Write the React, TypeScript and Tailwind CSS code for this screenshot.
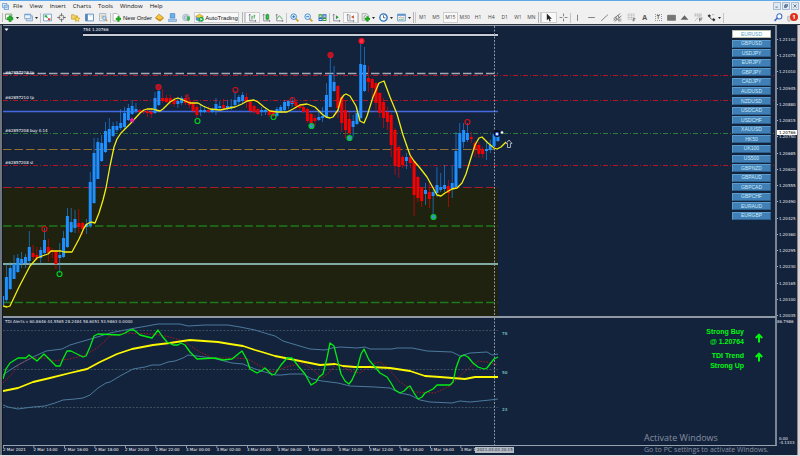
import type { ReactNode } from "react";

const MENU = ["File", "View", "Insert", "Charts", "Tools", "Window", "Help"];
const PERIODS = ["M1", "M5", "M15", "M30", "H1", "H4", "D1", "W1", "MN"];
const SYMBOLS = [
  "EURUSD", "GBPUSD", "USDJPY", "EURJPY", "GBPJPY", "CADJPY", "AUDUSD", "NZDUSD", "USDCAD", "USDCHF",
  "XAUUSD", "HK50", "UK100", "US500", "GBPNZD", "GBPAUD", "GBPCAD", "GBPCHF", "EURAUD", "EURGBP",
];
const PRICES = Array.from({ length: 18 }, (_, i) => (1.2114 - i * 0.00065).toFixed(5));
const TIMES = [
  "2 Mar 2021", "2 Mar 14:00", "2 Mar 16:00", "2 Mar 18:00", "2 Mar 20:00", "2 Mar 22:00",
  "3 Mar 00:00", "3 Mar 02:00", "3 Mar 04:00", "3 Mar 06:00", "3 Mar 08:00", "3 Mar 10:00",
  "3 Mar 12:00", "3 Mar 14:00", "3 Mar 16:00", "3 Mar 1",
];

const BAR_STEP = 3.81;
const UP = "#1e90ff";
const DOWN = "#f80000";

// up (1) or down (0), high, body top, body bottom, low
type Candle = [number, number, number, number, number];
const CANDLES: Candle[] = [
  [1, 292, 296, 305, 308], [1, 264, 277, 300, 302], [1, 262, 268, 289, 290], [1, 255, 264, 279, 279],
  [1, 254, 258, 272, 273], [1, 252, 259, 264, 268], [1, 254, 257, 263, 268], [1, 231, 247, 261, 264],
  [0, 245, 253, 257, 260], [0, 247, 255, 258, 260], [1, 247, 250, 258, 263], [1, 228, 240, 253, 255],
  [0, 239, 247, 253, 262], [0, 248, 250, 252, 258], [0, 250, 251, 264, 269], [1, 243, 255, 258, 273],
  [1, 231, 238, 257, 258], [1, 208, 216, 247, 248], [1, 208, 222, 232, 233], [1, 210, 219, 228, 233],
  [0, 209, 223, 227, 233], [0, 222, 223, 229, 235], [1, 219, 224, 227, 234], [1, 172, 182, 226, 228],
  [1, 138, 153, 203, 204], [1, 138, 142, 179, 179], [1, 135, 143, 161, 162], [1, 122, 131, 152, 153],
  [1, 118, 129, 142, 143], [1, 122, 126, 136, 137], [1, 121, 126, 130, 132], [1, 109, 123, 128, 130],
  [1, 107, 113, 127, 130], [1, 104, 108, 120, 121], [1, 100, 106, 114, 115], [1, 103, 109, 111, 113],
  [0, 109, 110, 112, 113], [0, 109, 111, 112, 114], [0, 110, 111, 113, 117], [0, 108, 112, 114, 118],
  [1, 92, 98, 113, 114], [1, 88, 91, 105, 106], [0, 89, 98, 101, 103], [0, 95, 98, 102, 103],
  [0, 95, 98, 102, 105], [0, 97, 100, 104, 107], [1, 97, 101, 104, 108], [1, 96, 98, 103, 105],
  [0, 95, 98, 103, 105], [0, 98, 101, 105, 108], [0, 101, 103, 111, 113], [0, 105, 107, 115, 118],
  [1, 105, 110, 112, 116], [1, 107, 110, 112, 113], [0, 106, 110, 112, 113], [1, 108, 110, 112, 113],
  [1, 98, 104, 110, 115], [1, 101, 106, 108, 110], [0, 99, 105, 108, 110], [1, 100, 106, 108, 110],
  [1, 99, 106, 108, 110], [1, 91, 100, 105, 107], [1, 95, 97, 102, 106], [1, 92, 95, 101, 103],
  [0, 93, 97, 102, 108], [0, 100, 102, 111, 113], [0, 105, 106, 112, 114], [0, 108, 109, 114, 115],
  [1, 107, 110, 112, 116], [1, 108, 110, 112, 115], [0, 110, 111, 115, 117], [0, 111, 112, 116, 117],
  [1, 107, 109, 116, 117], [1, 105, 107, 111, 113], [1, 100, 102, 110, 111], [1, 100, 101, 106, 109],
  [1, 97, 101, 104, 107], [0, 101, 102, 106, 110], [0, 104, 106, 108, 110], [0, 105, 107, 112, 113],
  [0, 108, 109, 121, 123], [0, 113, 114, 123, 125], [0, 115, 118, 121, 126], [1, 112, 117, 120, 121],
  [1, 107, 116, 118, 122], [1, 83, 95, 117, 118], [1, 57, 75, 107, 107], [1, 66, 82, 91, 92],
  [0, 85, 86, 108, 118], [0, 95, 97, 123, 132], [0, 100, 110, 130, 138], [0, 112, 119, 133, 138],
  [1, 115, 121, 127, 137], [1, 107, 113, 124, 125], [1, 42, 64, 118, 119], [1, 47, 65, 91, 92],
  [0, 66, 78, 82, 92], [0, 78, 79, 88, 98], [0, 82, 83, 103, 112], [0, 92, 93, 113, 118],
  [0, 98, 102, 118, 128], [0, 107, 112, 122, 130], [0, 113, 115, 145, 157], [0, 128, 130, 165, 175],
  [0, 145, 147, 167, 178], [0, 155, 157, 165, 168], [1, 153, 157, 161, 169], [0, 153, 157, 163, 168],
  [0, 160, 161, 195, 216], [0, 176, 177, 198, 202], [0, 187, 188, 201, 207], [1, 183, 190, 194, 205],
  [0, 182, 192, 199, 208], [1, 190, 192, 196, 217], [1, 167, 185, 193, 197], [1, 173, 187, 190, 192],
  [1, 165, 185, 189, 192], [0, 180, 186, 193, 207], [1, 165, 183, 189, 198], [1, 132, 151, 187, 188],
  [1, 123, 133, 168, 169], [1, 123, 130, 142, 148], [1, 123, 133, 140, 142], [0, 132, 137, 139, 143],
  [0, 141, 143, 149, 157], [0, 142, 145, 154, 158], [0, 147, 149, 154, 158], [1, 142, 149, 151, 160],
  [1, 140, 145, 150, 153], [1, 133, 134, 146, 147], [1, 130, 135, 141, 142],
];

const AVERAGE =
  "3,306 7,307 10,306 19,287 30,266 37,258 42,256 48,254 51,251 61,251 64,252 72,252 79,239 84,228 87,224 91,222 95,223 99,213 103,200 106,188 110,166 114,147 117,139 121,133 130,124 140,113 144,110 147,109 153,109 156,110 160,111 163,109 170,102 175,99 178,98 183,100 190,103 198,103 203,106 210,109 220,110 235,107 242,104 247,101 254,100 258,102 264,107 270,111 278,112 287,112 293,109 300,105 307,104 315,107 322,114 326,117 330,118 333,117 338,110 341,99 344,95 346,94 350,96 356,106 360,121 364,123 367,116 373,97 379,83 384,81 390,97 397,114 403,135 410,155 414,161 420,168 427,177 432,186 437,195 441,196 445,193 452,189 457,188 462,183 466,174 470,161 475,145 479,138 482,137 488,143 494,148 497,149 501,147 506,142";

const BAND_TOP =
  "3,375 10,370 18,365 33,357 46,351 62,349 70,345 94,338 110,333 130,329 147,326 158,324 180,324 188,326 205,325 228,325 240,327 255,330 268,334 275,336 283,341 293,344 310,349 325,350 332,348 340,347 357,348 365,347 370,349 392,349 397,348 412,348 427,351 452,352 460,356 470,353 487,352 492,355 498,354";
const BAND_BOTTOM =
  "3,405 8,407 18,409 25,408 33,407 45,406 55,403 63,400 75,399 83,398 90,395 98,388 106,383 110,382 120,376 133,369 145,367 152,365 160,365 168,362 175,361 183,358 188,355 197,356 212,358 220,360 232,363 243,364 255,369 265,372 275,375 282,375 290,374 303,374 312,379 322,381 338,383 350,386 375,387 390,388 400,393 410,395 420,400 430,402 452,403 460,401 470,402 480,401 490,400 498,399";
const BASE =
  "3,391 18,388 33,382 50,378 70,373 87,369 100,362 117,354 132,349 153,345 170,343 183,341 190,340 218,342 230,344 243,346 255,350 262,352 275,356 290,359 305,362 320,365 335,364 343,366 355,367 370,367 390,368 410,371 425,376 440,377 465,379 475,377 498,377";
const SIGNAL =
  "3,383 12,374 20,364 30,358 47,358 53,361 70,359 85,355 97,348 110,336 125,333 153,334 170,337 183,341 200,352 213,358 235,358 248,359 260,366 272,372 290,366 303,363 313,370 322,378 330,372 337,363 350,371 360,373 372,364 380,362 388,368 400,382 415,392 435,393 450,386 460,376 470,367 478,361 487,362 498,365";
const RSI =
  "3,379 6,369 10,363 18,358 26,358 29,355 33,358 37,361 44,354 51,361 56,366 60,366 63,359 67,351 71,351 83,357 86,356 90,347 94,336 98,334 120,335 125,333 130,330 134,330 140,335 152,338 158,330 162,336 167,342 173,345 178,345 181,343 185,345 190,352 197,359 215,358 223,360 232,359 237,355 242,351 247,360 250,369 257,373 261,371 265,368 272,375 275,374 281,365 287,358 292,358 299,367 305,374 311,385 316,382 319,377 323,374 327,358 330,343 334,346 337,358 341,374 345,381 349,384 352,380 357,369 361,354 364,349 369,360 375,367 380,373 387,377 391,383 395,390 400,393 404,391 408,387 410,386 414,393 418,399 422,397 425,393 433,389 437,385 450,385 453,382 456,368 460,357 464,355 468,357 473,363 478,367 484,369 487,368 490,364 494,359 498,357";

const CHART_FONT = "DejaVu Sans, sans-serif";

function Icon({ children }: { children: ReactNode }) {
  return (
    <svg viewBox="0 0 16 16" className="size-[9px] shrink-0" fill="none" aria-hidden="true">
      {children}
    </svg>
  );
}

function Sep() {
  return <div className="h-[10px] w-px shrink-0 bg-[#c4c4c4]" />;
}

function DoubleSep() {
  return (
    <div className="flex h-[11px] w-[3px] shrink-0 justify-between">
      <div className="w-px bg-[#b4b4b4]" />
      <div className="w-px bg-[#c8c8c8]" />
    </div>
  );
}

function Tool({ label, pressed, menu, children }: { label: string; pressed?: boolean; menu?: boolean; children: ReactNode }) {
  return (
    <button
      type="button"
      aria-label={label}
      className={
        pressed
          ? "flex h-[11px] flex-1 items-center justify-center border border-[#cfcfcf] bg-[#f9f9f9]"
          : "flex h-[11px] flex-1 items-center justify-center gap-[2px]"
      }
    >
      {children}
      {menu && (
        <svg viewBox="0 0 6 4" className="h-[2px] w-[3px]" aria-hidden="true">
          <path d="M0 0h6L3 4z" fill="#222" />
        </svg>
      )}
    </button>
  );
}

const plus = <path d="M7 9h3V6h3v3h3v3h-3v3h-3v-3H7z" fill="#18b018" stroke="#0a7a0a" strokeWidth=".6" />;
const axes = <path d="M3 2v12h11M1.500 4 3 2l1.500 2M12.500 12.500 14.500 14l-2 1.500" stroke="#667" strokeWidth="1.200" />;

function Toolbar() {
  return (
    <div className="flex h-[13px] shrink-0 items-center overflow-hidden bg-[#f0f0f0] font-['Open_Sans',sans-serif]" role="toolbar">
      <div className="ml-[2px] h-[9px] w-px shrink-0 bg-[#bbb]" />
      <div className="flex w-[37px] shrink-0">
        <Tool label="New chart" menu>
          <Icon>
            <path d="M1 2h11v9H1z" fill="#fff" stroke="#5a8a5a" strokeWidth="1.400" />
            <path d="M7 15v-3H4V8h3V5h4v3h3v4h-3v3z" fill="#20b428" stroke="#0b7c16" />
          </Icon>
        </Tool>
        <Tool label="Profiles" menu>
          <Icon>
            <path d="M4 5h11v9H4z" fill="#cfe2f5" stroke="#5580b0" />
            <path d="M1 2h11v8H1z" fill="#e8f2fc" stroke="#5580b0" />
            <path d="M1 2h11v2H1z" fill="#6fa3da" />
          </Icon>
        </Tool>
      </div>
      <Sep />
      <div className="flex w-[69px] shrink-0">
        <Tool label="Market watch">
          <Icon>
            <path d="M1 2h14v12H1z" fill="#fff" stroke="#5c92c8" strokeWidth="1.400" />
            <path d="M3 8V4h5L6.500 5.500 9 8 7 9 5 7z" fill="#1ba83a" />
            <path d="M13 8v5H8l1.500-1.500L8 10l2-1 1.500 1z" fill="#e03a2a" />
          </Icon>
        </Tool>
        <Tool label="Data window">
          <Icon>
            <circle cx="8" cy="8" r="4.500" stroke="#666" strokeWidth="1.400" />
            <path d="M8 0v6M8 10v6M0 8h6M10 8h6" stroke="#666" strokeWidth="1.400" />
          </Icon>
        </Tool>
        <Tool label="Navigator">
          <Icon>
            <path d="M1 3h4l1 2h5v6H1z" fill="#f8d35c" stroke="#b08a20" />
            <path d="m11 6 1.500 3 3.300.4-2.400 2.300.6 3.300-3-1.600L8 15l.6-3.300L6.200 9.400 9.500 9z" fill="#fbe14a" stroke="#b48d18" />
          </Icon>
        </Tool>
        <Tool label="Terminal">
          <Icon>
            <path d="M1 2h14v12H1z" fill="#fff" stroke="#4c82be" strokeWidth="1.500" />
            <path d="M1 2h4v12H1z" fill="#4c82be" />
            <path d="M7 5h6" stroke="#a8c8ea" />
          </Icon>
        </Tool>
        <Tool label="Strategy tester">
          <Icon>
            <path d="M1 1h11v13H1z" fill="#f2f6fb" stroke="#6f93bb" />
            <path d="M3 4h7M3 6.500h5M3 9h4" stroke="#cc9a4a" />
            <circle cx="9.500" cy="9" r="3.200" fill="#bfe0f8" stroke="#4f7fb4" />
            <path d="m12 11.500 3 3" stroke="#c99025" strokeWidth="2" />
          </Icon>
        </Tool>
      </div>
      <Sep />
      <div className="flex w-[42px] shrink-0">
        <button type="button" className="flex flex-1 items-center justify-center gap-[2px] font-['Liberation_Sans',sans-serif] text-[6px] leading-none whitespace-nowrap text-[#111]">
          <Icon>
            <path d="M2 1h7l3 3v10H2z" fill="#fff" stroke="#888" />
            {plus}
          </Icon>
          New Order
        </button>
      </div>
      <div className="flex w-[40px] shrink-0">
        <Tool label="MetaEditor">
          <Icon>
            <path d="m1 8 6-6 8 6-6 6z" fill="#f4c53c" stroke="#a37514" />
            <path d="m1 8 8 4 6-4v2l-6 5-8-5z" fill="#c58c1c" />
          </Icon>
        </Tool>
        <Tool label="Community">
          <Icon>
            <path d="M4 1h8v8H4z" fill="#68b0ee" stroke="#2e76bb" />
            <path d="M1 11h14v4H1z" fill="#a7c9ec" stroke="#5a8fc4" />
          </Icon>
        </Tool>
        <Tool label="Signals">
          <Icon>
            <circle cx="7" cy="8" r="6" fill="#cfdce8" stroke="#8aa0b4" />
            <circle cx="7" cy="8" r="3" stroke="#6d8cab" />
            <path d="M9 6h5v6l-3 3-2-3z" fill="#3fae52" />
          </Icon>
        </Tool>
      </div>
      <div className="flex w-[49px] shrink-0 pr-[3px] pl-px">
        <button
          type="button"
          className="flex h-[11px] flex-1 items-center justify-center gap-px border border-[#cfcfcf] bg-[#f9f9f9] font-['Liberation_Sans',sans-serif] text-[6px] leading-none text-[#111]"
        >
          <Icon>
            <path d="m1 6 7-4 7 4-7 4z" fill="#f2cf4c" stroke="#a5831a" />
            <path d="M2 8v4l6 3V10z" fill="#5a9ddd" stroke="#2e6dab" />
            <circle cx="11" cy="11" r="4.500" fill="#18a838" />
            <path d="m9.500 8.500 4 2.500-4 2.500z" fill="#fff" />
          </Icon>
          AutoTrading
        </button>
      </div>
      <DoubleSep />
      <div className="flex w-[41px] shrink-0">
        <Tool label="Bar chart" pressed>
          <Icon>
            {axes}
            <path d="M7 12V5M7 7h2M11 10V3M11 5h2" stroke="#2b9a3b" strokeWidth="1.400" />
          </Icon>
        </Tool>
        <Tool label="Candlesticks">
          <Icon>
            {axes}
            <path d="M9.500 1v12" stroke="#187a26" />
            <path d="M7 3h5v8H7z" fill="#2fc043" stroke="#187a26" />
          </Icon>
        </Tool>
        <Tool label="Line chart">
          <Icon>
            {axes}
            <path d="M4 10c2-5 4-6 6-3l3 4" stroke="#2b9a3b" strokeWidth="1.400" />
          </Icon>
        </Tool>
      </div>
      <Sep />
      <div className="flex w-[42px] shrink-0">
        <Tool label="Zoom in">
          <Icon>
            <path d="m10 10 5 5" stroke="#d2a02c" strokeWidth="3" />
            <circle cx="6.500" cy="6.500" r="5" fill="#dff0fc" stroke="#3c86cc" strokeWidth="1.600" />
            <path d="M4 6.500h5M6.500 4v5" stroke="#2f6fb2" strokeWidth="1.600" />
          </Icon>
        </Tool>
        <Tool label="Zoom out">
          <Icon>
            <path d="m10 10 5 5" stroke="#d2a02c" strokeWidth="3" />
            <circle cx="6.500" cy="6.500" r="5" fill="#dff0fc" stroke="#3c86cc" strokeWidth="1.600" />
            <path d="M4 6.500h5" stroke="#2f6fb2" strokeWidth="1.600" />
          </Icon>
        </Tool>
        <Tool label="Tile windows">
          <Icon>
            <path d="M1 2h7v6H1zM8 8h7v6H8z" fill="#35a02e" />
            <path d="M8 2h7v6H8zM1 8h7v6H1z" fill="#2a62c4" />
            <path d="M2.500 4.500h4v2h-4zM9.500 4.500h4v2h-4zM2.500 10.500h4v2h-4zM9.500 10.500h4v2h-4z" fill="#e6f2e6" />
          </Icon>
        </Tool>
      </div>
      <Sep />
      <div className="flex w-[28px] shrink-0">
        <Tool label="Auto scroll">
          <Icon>
            {axes}
            <path d="m7 4 5 3.500L7 11z" fill="#2b9a3b" />
          </Icon>
        </Tool>
        <Tool label="Chart shift" pressed>
          <Icon>
            {axes}
            <path d="M7 3v9" stroke="#667" strokeWidth="1.200" />
            <path d="m14 4-5 3 5 3z" fill="#c4502c" />
          </Icon>
        </Tool>
      </div>
      <Sep />
      <div className="flex w-[54px] shrink-0">
        <Tool label="Indicators" menu>
          <Icon>
            <path d="M2 1h8l3 3v9H2z" fill="#e8ece8" stroke="#888" />
            <path d="M5 10c1-6 2-6 4-6" stroke="#666" />
            {plus}
          </Icon>
        </Tool>
        <Tool label="Periods" menu>
          <Icon>
            <circle cx="8" cy="8" r="6.500" fill="#fff" stroke="#2675cc" strokeWidth="2.400" />
            <path d="M8 4v4.500h3.500" stroke="#444" strokeWidth="1.400" />
          </Icon>
        </Tool>
        <Tool label="Templates" menu>
          <Icon>
            <path d="M1 2h14v12H1z" fill="#eef6ff" stroke="#5b90c8" strokeWidth="1.400" />
            <path d="M1 2h14v3H1z" fill="#5b90c8" />
            <path d="m3 9 3-2 3 2 4-2" stroke="#c0692c" />
            <path d="m3 12 3-1 3 1 4-2" stroke="#2b9a3b" />
          </Icon>
        </Tool>
      </div>
      <DoubleSep />
      <div className="flex w-[122px] shrink-0 items-center">
        {PERIODS.map((p) => (
          <button
            key={p}
            type="button"
            className={
              p === "M15"
                ? "h-[11px] flex-1 border border-[#cfcfcf] bg-[#f9f9f9] text-center text-[5px] leading-none text-[#444]"
                : "h-[11px] flex-1 text-center text-[5px] leading-none text-[#444]"
            }
          >
            {p}
          </button>
        ))}
      </div>
      <DoubleSep />
      <div className="flex w-[29px] shrink-0">
        <Tool label="Cursor" pressed>
          <Icon>
            <path d="M5 1v12l3-3 2 5 2-1-2-4h4z" fill="#222" />
          </Icon>
        </Tool>
        <Tool label="Crosshair">
          <Icon>
            <path d="M8 1v5M8 10v5M1 8h5M10 8h5" stroke="#666" strokeWidth="1.400" />
          </Icon>
        </Tool>
      </div>
      <Sep />
      <div className="flex w-[134px] shrink-0">
        <Tool label="Vertical line">
          <Icon><path d="M8 3v11" stroke="#666" strokeWidth="1.400" /></Icon>
        </Tool>
        <Tool label="Horizontal line">
          <Icon><path d="M2 8h12" stroke="#666" strokeWidth="1.400" /></Icon>
        </Tool>
        <Tool label="Trendline">
          <Icon><path d="M2 14 14 3" stroke="#666" strokeWidth="1.400" /></Icon>
        </Tool>
        <Tool label="Equidistant channel">
          <Icon>
            <path d="M1 10 13 1M3 15 15 5M5 7l2 5M9 4l2 5M1 13l4-3" stroke="#555" strokeWidth="1.300" />
            <path d="M10 11h5M10 14h5M10 11v4" stroke="#555" />
          </Icon>
        </Tool>
        <Tool label="Fibonacci retracement">
          <Icon>
            <path d="M1 2h13M1 5h13M1 8h13M1 11h8" stroke="#888" strokeDasharray="2 1" />
            <path d="M11 10h4M11 10v5M11 12.500h3" stroke="#444" strokeWidth="1.200" />
          </Icon>
        </Tool>
        <Tool label="Text">
          <span className="text-[7px] leading-none font-bold text-[#555]">A</span>
        </Tool>
        <Tool label="Text label">
          <span className="border border-dotted border-[#999] px-px text-[5px] leading-none font-bold text-[#555]">T</span>
        </Tool>
        <Tool label="Rectangle">
          <Icon><path d="M1 4h14v9H1z" fill="#777" stroke="#555" /></Icon>
        </Tool>
        <Tool label="Triangle">
          <Icon><path d="m8 4 7 8H1z" fill="#666" /></Icon>
        </Tool>
        <Tool label="Cycle lines">
          <Icon>
            <path d="M1 2h13M1 5h13M2 14l7-8" stroke="#777" strokeDasharray="3 1" />
            <path d="M10 9h5M10 9v6M10 12h4" stroke="#444" strokeWidth="1.200" />
          </Icon>
        </Tool>
      </div>
      <div className="flex w-[18px] shrink-0">
        <Tool label="Arrows" menu>
          <Icon>
            <path d="m1 5 3-3 3 3-3 3zM9 12l3-3 3 3-3 3z" fill="#333" />
            <path d="M5 6c0 4 2 5 5 5" stroke="#333" strokeWidth="1.400" />
            <path d="M9 3h4" stroke="#888" />
          </Icon>
        </Tool>
      </div>
      <Sep />
      <div className="ml-auto flex shrink-0 items-center gap-[4px] pr-[2px]">
        <button type="button" aria-label="Search">
          <Icon>
            <circle cx="9.500" cy="6" r="4.500" fill="#fff" stroke="#3767c8" strokeWidth="1.800" />
            <path d="m6 9-5 5" stroke="#3767c8" strokeWidth="2.600" />
          </Icon>
        </button>
        <button type="button" aria-label="Notifications" className="relative flex w-[11px] items-center">
          <Icon>
            <path d="M1 6h12v7H6l-3 3v-3H1z" fill="#d4d4d4" stroke="#aaa" />
          </Icon>
          <span className="absolute top-0 right-0 flex size-2 items-center justify-center rounded-full bg-[#e0301c] text-[6px] leading-none font-bold text-white">
            1
          </span>
        </button>
      </div>
    </div>
  );
}

function MenuBar() {
  return (
    <header className="flex h-[11px] shrink-0 items-center border-t border-[#5ea9ea] bg-[#f1f1f1] font-['Open_Sans',sans-serif]">
      <svg viewBox="0 0 16 16" className="mr-[4px] ml-[2px] size-[7px]" fill="none" aria-hidden="true">
        <path d="M1 1h10v9H1z" fill="#e8f2fc" stroke="#4a86c8" strokeWidth="1.500" />
        <path d="M5 5h10v10H5z" fill="#cde4fa" stroke="#4a86c8" strokeWidth="1.500" />
        <path d="m7 12 2-4 2 3 3-4" stroke="#3a76b8" />
      </svg>
      <nav className="flex gap-[7px]">
        {MENU.map((m) => (
          <button key={m} type="button" className="text-[6px] leading-none text-[#111]">{m}</button>
        ))}
      </nav>
      <div className="ml-auto flex gap-px pr-px">
        {["M4 11h6", "M6 4h6v5H6zM4 7h5v5H4z", "M4 4l8 8M12 4l-8 8"].map((d, i) => (
          <button key={d} type="button" aria-label={["Minimize", "Restore", "Close"][i]} className="flex h-2 w-[8px] items-center justify-center border border-[#a9bdd4] bg-[#dfe9f5]">
            <svg viewBox="0 0 16 16" className="size-[6px]" fill="none" aria-hidden="true">
              <path d={d} stroke="#42597a" strokeWidth="2" />
            </svg>
          </button>
        ))}
      </div>
    </header>
  );
}

// hollow rings mark plain swings, filled ones confirmed signals
const RINGS: [number, number, string, string][] = [
  [44, 229, "#d01010", "none"], [59, 274, "#00d020", "none"], [158, 87, "#d81020", "#a01828"],
  [235, 90, "#d01018", "none"], [197, 121, "#00d020", "none"], [292, 100, "#d01018", "none"],
  [273, 117, "#00c820", "none"], [311, 126, "#00c820", "#3d8fd0"], [349, 138, "#00c820", "#3d8fd0"],
  [433, 217, "#00c820", "#3d8fd0"], [467, 122, "#d81018", "none"], [330, 55, "#d81020", "#b01828"],
  [361, 41, "#e81028", "#ff3040"],
];

const ORDERS: [string, number][] = [
  ["#62857208 tp", 74], ["#62857210 tp", 99], ["#62857208 buy 0.14", 132], ["#62857208 sl", 164],
];

function PriceChart() {
  return (
    <svg className="h-[290px] w-full" role="img" aria-label="Price chart" fontFamily={CHART_FONT} fontSize="4">
      <g transform="translate(-3 -26)">
        <rect x="3" y="188" width="495" height="128" fill="#1f220e" />
        <g stroke="#b01626" strokeDasharray="5 2 1 2">
          <path d="M3 75.500H774M3 100.500H774M3 165.500H774" />
          <path d="M3 133.500H774" stroke="#2c7a3c" />
        </g>
        <path d="M83 34.500H498" stroke="#0a1428" strokeWidth="4" />
        <path d="M83 35H498" stroke="#c8ccd6" strokeWidth="2" />
        <path d="M3 73.500H498" stroke="#a4a9b4" strokeWidth="1.500" strokeDasharray="8.500 3" />
        <path d="M3 111.500H498" stroke="#4468e0" strokeWidth="1.600" />
        <path d="M3 149.500H498" stroke="#94702a" strokeDasharray="8.500 3" />
        <path d="M3 187.500H498" stroke="#a81c2a" strokeDasharray="8.500 3" />
        <path d="M3 226H498M3 302.500H498" stroke="#1c7a1c" strokeWidth="1.600" strokeDasharray="8.500 3" />
        <path d="M3 264H498" stroke="#80aca4" strokeWidth="2" />
        <path d="M494.500 26V316" stroke="#8d97a4" strokeDasharray="2 1.500" />
        {CANDLES.map(([up, high, top, bottom, low], i) => {
          const x = 2.6 + i * BAR_STEP;
          return (
            <g key={i} fill={up ? UP : DOWN}>
              <rect x={x - 0.4} y={high} width="0.8" height={low - high} opacity="0.75" />
              <rect x={x - 1.5} y={top} width="3" height={bottom - top} />
            </g>
          );
        })}
        <polyline points={AVERAGE} fill="none" stroke="#f2ee10" strokeWidth="1.300" strokeLinejoin="round" />
        {RINGS.map(([x, y, stroke, fill]) => (
          <circle key={`${x}-${y}`} cx={x + 0.5} cy={y} r="2.500" stroke={stroke} strokeWidth="1.200" fill={fill} />
        ))}
        <path d="M189 95h-3v2h3v2h-3" stroke="#c01820" fill="none" />
        <path d="m132 117 .9 2 2.100.2-1.500 1.500.5 2.100-2-1.100-2 1.100.5-2.100-1.500-1.500 2.100-.2z" fill="#f018a0" />
        <circle cx="497" cy="133.500" r="3.400" fill="#050a18" />
        <circle cx="497" cy="134" r="1.700" fill="#dde6ff" stroke="#3060e0" />
        <circle cx="502" cy="132.500" r="1.300" fill="#fff" />
        <path d="m509 140 3 3.500h-1.500v4h-3v-4H506z" fill="#14233c" stroke="#c8ccd6" strokeWidth=".8" />
        <path d="M4.500 28.500h4l-2 2.500z" fill="#fff" />
        <g fill="#fff">
          <text x="83" y="31">754 1.20766</text>
          {ORDERS.map(([text, y]) => (
            <text key={text} x="5" y={y}>{text}</text>
          ))}
        </g>
      </g>
    </svg>
  );
}

function TdiChart() {
  return (
    <svg className="h-[127px] w-full" role="img" aria-label="TDI indicator" fontFamily={CHART_FONT} fontSize="4">
      <g transform="translate(-3 -318)" fill="none" strokeLinejoin="round">
        <path d="M3 330.500H498M3 369.500H498M3 407.500H498" stroke="#3c4f5c" strokeDasharray="2 1.500" />
        <path d="M494.500 318V445" stroke="#8d97a4" strokeDasharray="2 1.500" />
        <polyline points={BAND_TOP} stroke="#4a7a9c" />
        <polyline points={BAND_BOTTOM} stroke="#4a7a9c" />
        <polyline points={SIGNAL} stroke="#b01820" strokeDasharray="1.500 1.500" />
        <polyline points={BASE} stroke="#fbf800" strokeWidth="1.800" />
        <polyline points={RSI} stroke="#00ee10" strokeWidth="1.300" />
        <text x="5" y="323" fill="#e4e8ee">TDI Alerts v 60.8646 44.5565 28.2484 58.6051 53.9863 0.0000</text>
        <g fill="#68b0b0" fontWeight="bold">
          <text x="502" y="335">78</text>
          <text x="502" y="374">50</text>
          <text x="502" y="411">23</text>
        </g>
      </g>
    </svg>
  );
}

function UpArrow() {
  return (
    <svg viewBox="0 0 8 10" className="h-[10px] w-2" aria-label="Up">
      <path d="M4 9.500V1.500M.8 5 4 1.700 7.200 5" fill="none" stroke="#00f810" strokeWidth="2" />
    </svg>
  );
}

function TimeAxis() {
  return (
    <svg className="h-[9px] w-full" role="img" aria-label="Time axis" fontFamily={CHART_FONT} fontSize="4">
      {TIMES.map((t, i) => (
        <g key={t}>
          <rect x={i * 30.5} y="0" width="0.8" height="2" fill="#aab2be" />
          <text x={i * 30.5} y="5" fill="#f0f3f6">{t}</text>
        </g>
      ))}
      <rect x="472" y="1" width="39" height="6" fill="#b4bac4" />
      <text x="474" y="5" fill="#27303c">2021.03.03 20:15</text>
    </svg>
  );
}

export default function App() {
  return (
    <div className="flex min-h-screen flex-col bg-[#14233c]">
      <MenuBar />
      <Toolbar />
      <main className="flex flex-1 border-t border-b border-t-[#2c3440] border-b-[#d8dce2]">
        <div className="w-[3px] shrink-0 border-r border-[#0c1626] bg-[#70767e]" />
        <div className="flex min-w-0 flex-1 flex-col">
          <div className="relative border-t border-r-2 border-b-2 border-t-[#98a2b0] border-r-[#7c8594] border-b-[#8f99a6]">
            <PriceChart />
            <div className="absolute top-[4px] right-[4px] flex h-[190px] w-[39px] flex-col justify-between font-['Liberation_Sans',sans-serif] text-[5px] leading-none">
              {SYMBOLS.map((s, i) => (
                <button
                  key={s}
                  type="button"
                  className={
                    i === 0
                      ? "h-2 border border-[#b8bca8] bg-white text-center text-[#5aa0cc]"
                      : "h-2 border border-[#5c9ccc] border-r-[#2c5f8c] border-b-[#2c5f8c] bg-[#4080b6] text-center text-[#c8e8f8]"
                  }
                >
                  {s}
                </button>
              ))}
            </div>
          </div>
          <div className="relative border-r-2 border-b border-r-[#7c8594] border-b-[#98a2b0]">
            <TdiChart />
            <div className="absolute top-[9px] right-[12px] flex gap-[11px] font-['Liberation_Sans',sans-serif] text-[7px] leading-[10px] font-bold text-[#00f810]">
              <div className="flex flex-col gap-[4px] text-right">
                <p>Strong Buy<br />@ 1.20764</p>
                <p>TDI Trend<br />Strong Up</p>
              </div>
              <div className="flex flex-col gap-[9px] pt-[6px]">
                <UpArrow />
                <UpArrow />
              </div>
            </div>
          </div>
          <div className="relative">
            <TimeAxis />
            <div className="absolute right-[10px] bottom-0 w-[123px] font-['Open_Sans',sans-serif] whitespace-nowrap text-[#8490a0]">
              <p className="text-[9px] leading-[12px]">Activate Windows</p>
              <p className="text-[7px] leading-[11px]">Go to PC settings to activate Windows.</p>
            </div>
          </div>
        </div>
        <aside className="w-[20px] shrink-0 font-['DejaVu_Sans',sans-serif] text-[4px] leading-[5px] text-[#e4e8ee]">
          <div className="relative flex h-[293px] flex-col justify-between pt-[12px]">
            {PRICES.map((p) => (
              <div key={p} className="flex items-center gap-px">
                <span className="h-px w-px bg-[#aab2be]" />
                {p}
              </div>
            ))}
            <div className="absolute top-[105px] left-0 w-full bg-white pl-[2px] text-black">1.20766</div>
          </div>
          <div className="relative flex h-[127px] flex-col justify-between pt-px">
            <span>86.7986</span>
            <span className="pl-[2px]">-4.1333</span>
            <span className="absolute bottom-[4px] left-[2px]">0.00</span>
          </div>
        </aside>
        <div className="w-[3px] shrink-0 border-l border-[#8c868c] bg-[#d8d2d6]" />
      </main>
    </div>
  );
}
